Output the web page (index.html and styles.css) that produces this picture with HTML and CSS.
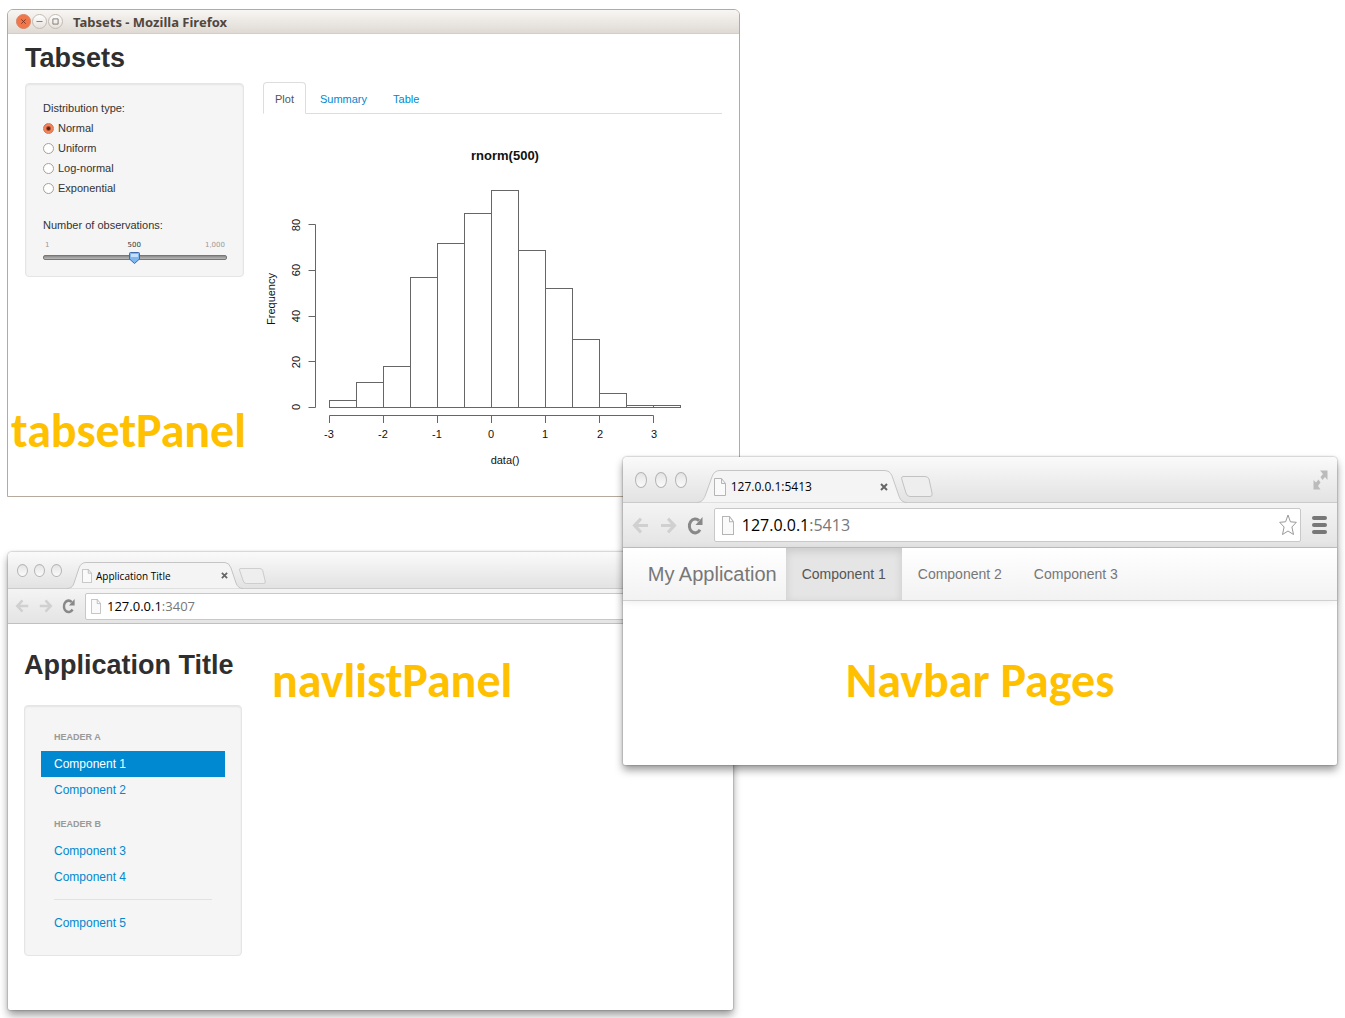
FILE: index.html
```html
<!DOCTYPE html>
<html lang="en">
<head>
<meta charset="utf-8">
<meta name="viewport" content="width=device-width, initial-scale=1">
<title>Shiny panel layouts</title>
<link rel="stylesheet" href="styles.css">
</head>
<body>
<main class="desktop">

  <section class="window firefox">
    <header class="titlebar">
      <button class="orb orb-close" type="button" aria-label="Close"><svg viewBox="0 0 15 15"><path d="M5 5l5 5M10 5l-5 5"/></svg></button>
      <button class="orb" type="button" aria-label="Minimize"><svg viewBox="0 0 15 15"><path d="M4 7.500h7"/></svg></button>
      <button class="orb" type="button" aria-label="Maximize"><svg viewBox="0 0 15 15"><path d="M4.500 4.500h6v6h-6z"/></svg></button>
      <span class="titlebar-text">Tabsets - Mozilla Firefox</span>
    </header>
    <div class="tabsets-page">
      <div class="side">
        <h1 class="page-title">Tabsets</h1>
        <form class="well controls">
          <fieldset class="choices">
            <legend>Distribution type:</legend>
            <label><input type="radio" name="dist" checked> Normal</label>
            <label><input type="radio" name="dist"> Uniform</label>
            <label><input type="radio" name="dist"> Log-normal</label>
            <label><input type="radio" name="dist"> Exponential</label>
          </fieldset>
          <label class="slider-label" for="obs">Number of observations:</label>
          <div class="scale"><span>1</span><output for="obs">500</output><span>1,000</span></div>
          <input class="slider" id="obs" type="range" min="1" max="1000" value="500">
        </form>
        <p class="caption caption-tabset">tabsetPanel</p>
      </div>
      <div class="content">
        <nav class="tabs">
          <a class="tab-link active" href="#plot">Plot</a>
          <a class="tab-link" href="#summary">Summary</a>
          <a class="tab-link" href="#table">Table</a>
        </nav>
        <svg class="plot" id="plot" viewBox="0 0 458 366" role="img" aria-label="Histogram of rnorm(500)">
          <text class="plot-title" x="242" y="46">rnorm(500)</text>
          <g class="bars">
            <rect x="66.500" y="286.500" width="27" height="7"/>
            <rect x="93.500" y="268.500" width="27" height="25"/>
            <rect x="120.500" y="252.500" width="27" height="41"/>
            <rect x="147.500" y="163.500" width="27" height="130"/>
            <rect x="174.500" y="129.500" width="27" height="164"/>
            <rect x="201.500" y="99.500" width="27" height="194"/>
            <rect x="228.500" y="76.500" width="27" height="217"/>
            <rect x="255.500" y="136.500" width="27" height="157"/>
            <rect x="282.500" y="174.500" width="27" height="119"/>
            <rect x="309.500" y="225.500" width="27" height="68"/>
            <rect x="336.500" y="279.500" width="27" height="14"/>
            <rect x="363.500" y="291.500" width="27" height="2"/>
            <rect x="390.500" y="291.500" width="27" height="2"/>
          </g>
          <path class="axis" d="M45.500 293.500h7v-183h-7M45.500 247.500h7M45.500 202.500h7M45.500 156.500h7M66.500 309v-7.500h324v7.500M120.500 301.500v7.500M174.500 301.500v7.500M228.500 301.500v7.500M282.500 301.500v7.500M336.500 301.500v7.500"/>
          <g class="ticks">
            <text x="66" y="324">-3</text><text x="120" y="324">-2</text><text x="174" y="324">-1</text>
            <text x="228" y="324">0</text><text x="282" y="324">1</text><text x="337" y="324">2</text><text x="391" y="324">3</text>
            <text transform="translate(37 293) rotate(-90)">0</text>
            <text transform="translate(37 248) rotate(-90)">20</text>
            <text transform="translate(37 202) rotate(-90)">40</text>
            <text transform="translate(37 156) rotate(-90)">60</text>
            <text transform="translate(37 111) rotate(-90)">80</text>
            <text transform="translate(12 185) rotate(-90)">Frequency</text>
            <text x="242" y="350">data()</text>
          </g>
        </svg>
      </div>
    </div>
  </section>

  <section class="window chrome chrome-small">
    <header class="strip">
      <div class="lights"><i></i><i></i><i></i></div>
      <div class="tab">
        <svg class="tab-shape" viewBox="0 0 176 27" preserveAspectRatio="none"><path d="M0 26.500C5 26 6 24 7 21L12 6Q14 .5 19 .5H158Q162 .5 164 6L169 21Q171 26.500 176 26.500"/></svg>
        <svg class="doc" viewBox="0 0 12 18" preserveAspectRatio="none"><path d="M.5.5H7.500L11.500 5.500V17.500H.5zM7.500.5V5.500H11.500"/></svg>
        <span class="tab-text">Application Title</span>
        <button class="tab-close" type="button" aria-label="Close tab"><svg viewBox="0 0 8 8"><path d="M1 1l6 6M7 1l-6 6"/></svg></button>
      </div>
      <button class="new-tab" type="button" aria-label="New tab"><svg viewBox="0 0 32 21" preserveAspectRatio="none"><path d="M2 .5H24Q27 .5 28 3L31 17Q32 20.500 29 20.500H9Q6 20.500 5 17L.7 3Q.3.5 2 .5z"/></svg></button>
    </header>
    <div class="toolbar">
      <button class="tool faint" type="button" aria-label="Back"><svg viewBox="0 0 16 16" preserveAspectRatio="none"><path d="M15 8H2M8 1.500L1.500 8L8 14.500"/></svg></button>
      <button class="tool faint" type="button" aria-label="Forward"><svg viewBox="0 0 16 16" preserveAspectRatio="none"><path d="M1 8H14M8 1.500L14.500 8L8 14.500"/></svg></button>
      <button class="tool" type="button" aria-label="Reload"><svg viewBox="0 0 16 16" preserveAspectRatio="none"><path d="M12 3.500A5.800 6.500 0 1 0 13 12"/><path class="solid" d="M15.500 0V7.500H8.500z"/></svg></button>
      <a class="address" href="#app"><svg class="doc" viewBox="0 0 12 18" preserveAspectRatio="none"><path d="M.5.5H7.500L11.500 5.500V17.500H.5zM7.500.5V5.500H11.500"/></svg><span class="url">127.0.0.1<span class="port">:3407</span></span></a>
    </div>
    <div class="navlist-page" id="app">
      <div class="navlist-side">
        <h1 class="page-title">Application Title</h1>
        <nav class="well navlist">
          <h2>HEADER A</h2>
          <a class="active" href="#c1">Component 1</a>
          <a href="#c2">Component 2</a>
          <h2>HEADER B</h2>
          <a href="#c3">Component 3</a>
          <a href="#c4">Component 4</a>
          <hr>
          <a href="#c5">Component 5</a>
        </nav>
      </div>
      <p class="caption caption-navlist">navlistPanel</p>
    </div>
  </section>

  <section class="window chrome chrome-large">
    <header class="strip">
      <div class="lights"><i></i><i></i><i></i></div>
      <div class="tab">
        <svg class="tab-shape" viewBox="0 0 210 34" preserveAspectRatio="none"><path d="M0 33.500C5 33 6 31 8 27L15 7Q17 .5 23 .5H187Q193 .5 195 6L202 27Q204 33.500 210 33.500"/></svg>
        <svg class="doc" viewBox="0 0 12 18" preserveAspectRatio="none"><path d="M.5.5H7.500L11.500 5.500V17.500H.5zM7.500.5V5.500H11.500"/></svg>
        <span class="tab-text">127.0.0.1:5413</span>
        <button class="tab-close" type="button" aria-label="Close tab"><svg viewBox="0 0 8 8"><path d="M1 1l6 6M7 1l-6 6"/></svg></button>
      </div>
      <button class="new-tab" type="button" aria-label="New tab"><svg viewBox="0 0 32 21" preserveAspectRatio="none"><path d="M2 .5H24Q27 .5 28 3L31 17Q32 20.500 29 20.500H9Q6 20.500 5 17L.7 3Q.3.5 2 .5z"/></svg></button>
      <button class="expand" type="button" aria-label="Full screen"><svg viewBox="0 0 15 20"><path d="M7 .5H14.500V10L12 7L9.500 10L7.500 7L10 4zM.5 10L3 12.500L5.500 9.500L7.500 12.500L5 16L7.500 19.500H.5z"/></svg></button>
    </header>
    <div class="toolbar">
      <button class="tool faint" type="button" aria-label="Back"><svg viewBox="0 0 16 16" preserveAspectRatio="none"><path d="M15 8H2M8 1.500L1.500 8L8 14.500"/></svg></button>
      <button class="tool faint" type="button" aria-label="Forward"><svg viewBox="0 0 16 16" preserveAspectRatio="none"><path d="M1 8H14M8 1.500L14.500 8L8 14.500"/></svg></button>
      <button class="tool" type="button" aria-label="Reload"><svg viewBox="0 0 16 16" preserveAspectRatio="none"><path d="M12 3.500A5.800 6.500 0 1 0 13 12"/><path class="solid" d="M15.500 0V7.500H8.500z"/></svg></button>
      <a class="address" href="#nav"><svg class="doc" viewBox="0 0 12 18" preserveAspectRatio="none"><path d="M.5.5H7.500L11.500 5.500V17.500H.5zM7.500.5V5.500H11.500"/></svg><span class="url">127.0.0.1<span class="port">:5413</span></span>
        <svg class="star" viewBox="0 0 18 22"><path d="M9 1L11.400 7.800L17.300 8.300L12.900 13L14.500 20.500L9 17L3.500 20.500L5.100 13L.7 8.300L6.600 7.800z"/></svg></a>
      <button class="menu" type="button" aria-label="Menu"><i></i><i></i><i></i></button>
    </div>
    <nav class="navbar" id="nav">
      <a class="brand" href="#home">My Application</a>
      <a class="nav-item active" href="#n1">Component 1</a>
      <a class="nav-item" href="#n2">Component 2</a>
      <a class="nav-item" href="#n3">Component 3</a>
    </nav>
    <p class="caption caption-navbar">Navbar Pages</p>
  </section>

</main>
</body>
</html>
```
FILE: styles.css
```css
* { box-sizing: border-box; }

body {
  margin: 0;
  background: #fff;
  color: #333;
  font: 11px/20px "Liberation Sans", Arial, sans-serif;
}

h1, h2, p { margin: 0; }
a { color: #0088d0; text-decoration: none; }
svg { display: block; }
button { padding: 0; border: 0; background: none; flex: none; }

.desktop {
  position: relative;
  min-height: 1018px;
  overflow: hidden;
}

.window { position: absolute; background: #fff; }

/* Shared pieces */
.page-title {
  color: #2f2f2f;
  font-size: 27px;
  font-weight: bold;
  line-height: 40px;
  white-space: nowrap;
}

.well {
  background: #f5f5f5;
  border: 1px solid #e5e5e5;
  border-radius: 4px;
  box-shadow: inset 0 1px 2px rgba(0, 0, 0, .07);
}

.caption {
  color: #ffc000;
  font: bold 48px/54px Carlito, Lato, sans-serif;
  white-space: nowrap;
}

/* Firefox window */
.firefox {
  top: 9px;
  left: 7px;
  width: 54.5%;
  border: 1px solid #b5aa9d;
  border-radius: 6px 6px 0 0;
}

.titlebar {
  display: flex;
  align-items: center;
  gap: 1px;
  height: 24px;
  padding-left: 8px;
  background: linear-gradient(#f8f6f4, #dfdad3);
  border-bottom: 1px solid #d6cdc3;
  border-radius: 5px 5px 0 0;
}

.orb {
  width: 15px;
  height: 15px;
  border: 1px solid #c3bbb2;
  border-radius: 50%;
  background: linear-gradient(#fff, #e6e1db);
}
.orb svg { width: 13px; height: 13px; fill: none; stroke: #777068; }
.orb-close { background: #f0764b; border-color: #d98363; }
.orb-close svg { stroke: #773016; }

.titlebar-text {
  margin-left: 9px;
  color: #50473f;
  font: bold 13px/20px "Noto Sans", sans-serif;
}

.tabsets-page {
  display: grid;
  grid-template-columns: 236px 1fr;
  gap: 16px;
  min-height: 462px;
  padding: 0 17px 0 3px;
}

.side { display: flex; flex-direction: column; }
.side .page-title { padding: 4px 0 5px 14px; }
.side .well { margin: 0 3px 0 14px; height: 194px; padding: 14px 16px 0 17px; }

.choices { margin: 0; padding: 0; border: 0; }
.choices legend { padding: 0; }
.choices label { display: flex; align-items: center; gap: 4px; }

.choices input {
  appearance: none;
  width: 11px;
  height: 11px;
  margin: 0;
  border: 1px solid #aaa096;
  border-radius: 50%;
  background: #fff;
}
.choices input:checked {
  border-color: #d9734c;
  background: radial-gradient(circle, #57220f 0 1px, #f3835c 3px);
}

.slider-label { display: block; margin-top: 17px; }
.scale {
  display: flex;
  justify-content: space-between;
  padding: 4px 2px 0;
  color: #999;
  font: 7px/13px "DejaVu Sans", sans-serif;
}
.scale output { color: #333; padding-left: 14px; }

.slider {
  display: block;
  appearance: none;
  width: 100%;
  height: 10px;
  margin: 0;
  background: transparent;
}
.slider::-webkit-slider-runnable-track {
  height: 5px;
  border: 1px solid #777;
  border-radius: 2px;
  background: linear-gradient(#8a8a8a, #bbb);
}
.slider::-webkit-slider-thumb {
  appearance: none;
  width: 11px;
  height: 12px;
  margin-top: -4px;
  background: url("data:image/svg+xml,%3Csvg xmlns='http://www.w3.org/2000/svg' viewBox='0 0 11 12'%3E%3Cpath d='M1.500.5h8q1 0 1 1v5.500l-5 4.500l-5-4.500V1.500q0-1 1-1z' fill='%2380b7ee' stroke='%233f69ad'/%3E%3Cpath d='M2 2h7v3H2z' fill='%23c5e0fa'/%3E%3C/svg%3E");
}

.caption-tabset { margin-top: 127px; }

.content { padding-top: 48px; }
.tabs { display: flex; height: 32px; border-bottom: 1px solid #ddd; }
.tab-link {
  height: 32px;
  margin-right: 2px;
  padding: 6px 11px;
  border: 1px solid transparent;
}
.tab-link.active {
  color: #555;
  background: #fff;
  border-color: #ddd #ddd #fff;
  border-radius: 4px 4px 0 0;
}

.plot { width: 100%; max-width: 458px; fill: #111; text-anchor: middle; }
.plot-title { font: bold 13px "Liberation Sans", sans-serif; }
.ticks { font: 11px "Liberation Sans", sans-serif; }
.bars, .axis { fill: none; stroke: #666; }

/* Chrome windows */
.chrome {
  border-radius: 4px 4px 2px 2px;
  box-shadow: 0 5px 9px rgba(0, 0, 0, .4), 0 0 2px rgba(0, 0, 0, .45);
}

.strip {
  display: flex;
  align-items: flex-end;
  background: linear-gradient(#fafafa, #e2e2e2);
  box-shadow: inset 0 -1px #cbcbcb;
  border-radius: 4px 4px 0 0;
}

.lights { display: flex; align-self: center; }
.lights i {
  border: 1px solid #b4b4b4;
  border-radius: 50%;
  background: linear-gradient(#e4e4e4, #fbfbfb);
}

.tab { position: relative; display: flex; align-items: center; }
.tab-shape {
  position: absolute;
  inset: 0;
  width: 100%;
  height: 100%;
  fill: #f4f4f4;
  stroke: #c4c4c4;
}
.doc { position: relative; flex: none; fill: #fafafa; stroke: #b5b5b5; }
.tab-text { position: relative; flex: 1; white-space: nowrap; color: #000; font-family: "Open Sans", sans-serif; }
.tab-close { position: relative; }
.tab-close svg { width: 100%; height: 100%; fill: none; stroke: #666; stroke-width: 2; }
.new-tab svg { width: 100%; height: 100%; fill: #eee; stroke: #c2c2c2; }

.toolbar {
  display: flex;
  align-items: center;
  background: linear-gradient(#f4f4f4, #e4e4e4);
  border-bottom: 1px solid #c0c0c0;
}
.tool svg { width: 100%; height: 100%; fill: none; stroke: #888; stroke-width: 3; overflow: visible; }
.tool .solid { fill: #888; stroke: none; }
.tool.faint svg { stroke: #d0d0d0; }

.address {
  display: flex;
  flex: 1;
  align-items: center;
  background: #fff;
  border: 1px solid #c8c8c8;
  border-radius: 2px;
}
.url { flex: 1; color: #000; font-family: "Open Sans", sans-serif; }
.port { color: #777; }

/* Navlist window */
.chrome-small { top: 552px; left: 8px; width: 53.9%; }
.chrome-small .strip { height: 37px; }
.chrome-small .lights { gap: 6px; margin-left: 9px; }
.chrome-small .lights i { width: 11px; height: 13px; }
.chrome-small .tab { width: 176px; height: 27px; margin-left: 5px; padding: 0 15px; }
.chrome-small .tab .doc { width: 10px; height: 14px; margin-right: 4px; }
.chrome-small .tab-text { font-size: 10px; }
.chrome-small .tab-close { width: 7px; height: 7px; }
.chrome-small .new-tab { width: 27px; height: 16px; margin: 0 0 5px -4px; }
.chrome-small .toolbar { height: 35px; padding-left: 8px; gap: 10px; }
.chrome-small .tool { width: 13px; height: 14px; }
.chrome-small .address { height: 27px; padding-left: 5px; gap: 6px; }
.chrome-small .address .doc { width: 10px; height: 15px; }
.chrome-small .url { font-size: 13px; }

.navlist-page {
  display: flex;
  align-items: flex-start;
  gap: 30px;
  min-height: 386px;
  padding: 21px 16px 0;
}
.navlist-side { width: 218px; }
.navlist { height: 251px; margin-top: 20px; padding: 22px 16px 0; font-size: 12px; line-height: 26px; }
.navlist h2 { padding: 0 13px 5px; color: #999; font-size: 9px; line-height: 18px; }
.navlist a { display: block; padding: 0 13px; }
.navlist a + h2 { margin-top: 12px; }
.navlist .active { color: #fff; background: #0088d0; }
.navlist hr { height: 1px; margin: 9px 13px 10px; border: 0; background: #e2e2e2; }
.caption-navlist { margin-top: 9px; }

/* Navbar window */
.chrome-large { top: 457px; left: 46.3%; right: 8px; min-height: 308px; }
.chrome-large .strip { height: 46px; }
.chrome-large .lights { gap: 8px; margin-left: 12px; }
.chrome-large .lights i { width: 12px; height: 16px; }
.chrome-large .tab { width: 210px; height: 33px; margin-left: 10px; padding: 0 19px 0 17px; }
.chrome-large .tab .doc { width: 12px; height: 18px; margin-right: 5px; }
.chrome-large .tab-text { font-size: 12px; }
.chrome-large .tab-close { width: 8px; height: 8px; }
.chrome-large .new-tab { width: 32px; height: 21px; margin: 0 0 6px -6px; }
.expand { align-self: center; width: 15px; height: 20px; margin: 0 9px 0 auto; }
.expand svg { fill: #bbb; }
.chrome-large .toolbar { height: 45px; padding: 0 10px; gap: 11px; }
.chrome-large .tool { width: 16px; height: 17px; }
.chrome-large .address { height: 34px; padding: 0 3px 0 7px; gap: 8px; }
.chrome-large .address .doc { width: 12px; height: 19px; }
.chrome-large .url { font-size: 16px; }
.star { width: 18px; height: 22px; fill: #fff; stroke: #999; }

.menu { display: grid; gap: 3px; width: 15px; }
.menu i { height: 4px; border-radius: 2px; background: #777; }

.navbar {
  display: flex;
  height: 53px;
  background: linear-gradient(#fff, #f2f2f2);
  border-bottom: 1px solid #d0d0d0;
  box-shadow: 0 1px 8px rgba(0, 0, 0, .08);
  line-height: 52px;
  white-space: nowrap;
}
.brand { padding: 0 9px 0 25px; color: #777; font-size: 20px; }
.nav-item { padding: 0 16px; color: #777; font-size: 14px; }
.nav-item.active {
  color: #555;
  background: #e5e5e5;
  box-shadow: inset 0 3px 8px rgba(0, 0, 0, .125);
}
.caption-navbar { padding: 53px 0 0 223px; }
```
